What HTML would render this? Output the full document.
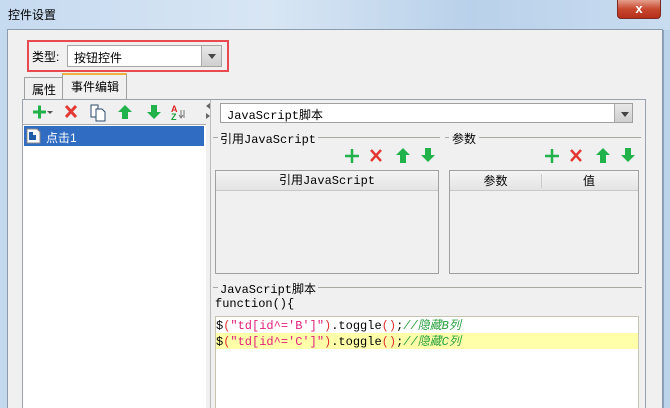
<!DOCTYPE html>
<html style="overflow:hidden;height:408px"><head><meta charset="utf-8"><style>
*{margin:0;padding:0;box-sizing:border-box}
body{width:670px;height:408px;overflow:hidden;position:relative;background:#f0f0f0;font-family:"Liberation Sans","Noto Sans CJK SC",sans-serif;font-size:12px;color:#000}
.a{position:absolute}
.m{font-family:"Liberation Mono","Noto Sans CJK SC",monospace;font-size:12px}
.cb{position:absolute;right:0;top:0;bottom:0;width:20px;background:linear-gradient(#e8e8e8,#cfcfcf);border-left:1px solid #aaa}
.cb:after{content:"";position:absolute;left:6px;top:8px;border-left:4px solid transparent;border-right:4px solid transparent;border-top:5px solid #444}
</style></head><body>
<div class="a" style="left:0;top:0;width:670px;height:30px;background:linear-gradient(90deg,#c6daf0,#d8e6f4 40%,#b9d1ea 70%,#c9dcf0)"></div>
<div class="a" style="left:8px;top:6px;font-size:12px">控件设置</div>
<div class="a" style="left:617px;top:0;width:44px;height:19px;background:linear-gradient(#e3a08e,#c8482f 50%,#b62e1a);border:1px solid #7a2a20;border-top:none;border-radius:0 0 4px 4px;color:#fff;font-weight:bold;text-align:center;line-height:18px;font-size:13px">x</div>
<div class="a" style="left:0;top:30px;width:7px;height:378px;background:#c4d8ee"></div>
<div class="a" style="left:663px;top:30px;width:7px;height:378px;background:#bcd3ec;border-left:1px solid #8aa2bd"></div>
<div class="a" style="left:7px;top:29px;width:656px;height:379px;background:#f0f0f0;border:1px solid #8c9cae;border-bottom:none"></div>
<div class="a" style="left:27px;top:40px;width:202px;height:32px;border:2px solid #e84a4f"></div>
<div class="a" style="left:32px;top:48px">类型:</div>
<div class="a" style="left:67px;top:45px;width:155px;height:22px;background:#fff;border:1px solid #a5a5a5"><span class="a" style="left:6px;top:3px">按钮控件</span><div class="cb"></div></div>
<div class="a" style="left:24px;top:77px;width:39px;height:22px;border:1px solid #a0a0a0;border-bottom:none;background:#f0f0f0;padding:3px 0 0 7px">属性</div>
<div class="a" style="left:62px;top:73px;width:65px;height:27px;border:1px solid #a0a0a0;border-top:2px solid #f0b040;border-bottom:none;background:#f0f0f0;padding:3px 0 0 8px">事件编辑</div>
<div class="a" style="left:22px;top:99px;width:624px;height:309px;border:1px solid #9aa3ad;border-bottom:none"></div>
<svg class="a" style="left:30px;top:102px" width="160" height="20">
<path d="M3 10h13M9.5 3.5v13" stroke="#22b24c" stroke-width="3"/>
<path d="M17 9l3 3 3-3z" fill="#555"/>
<path d="M36 4l10 11M46 4L36 15" stroke="#e53935" stroke-width="3"/>
<path d="M61 3h7v12h-7z" fill="#fff" stroke="#2a4a6a"/><path d="M66 7h6l3 3v9h-9z" fill="#fff" stroke="#2a4a6a"/>
<path d="M95 3l-7 7h4v7h6v-7h4z" fill="#22b24c"/>
<path d="M121 3v7h-4l7 7 7-7h-4V3z" fill="#22b24c"/>
<text x="141" y="10" font-size="9" fill="#d22" font-weight="bold" font-family="Liberation Sans">A</text>
<text x="141" y="18" font-size="9" fill="#1a9c3a" font-weight="bold" font-family="Liberation Sans">Z</text>
<path d="M151 8v8M149 13l2 3 2-3M154 8v8" stroke="#777" stroke-width="1" fill="none"/>
</svg>
<div class="a" style="left:23px;top:124px;width:183px;height:284px;background:#fff;border-top:1px solid #aaa"></div>
<div class="a" style="left:24px;top:126px;width:180px;height:20px;background:#2f6cc2"></div>
<svg class="a" style="left:26px;top:128px" width="16" height="16"><path d="M1 1h10l3 3v11H1z" fill="#fff" stroke="#888"/><path d="M3 4h4v3h3v5H3z" fill="#1e5ea8"/></svg>
<div class="a" style="left:46px;top:129px;color:#fff;font-size:12px">点击1</div>
<div class="a" style="left:205px;top:100px;width:6px;height:308px;border-right:1px solid #bbb"></div>
<svg class="a" style="left:205px;top:103px" width="6" height="20"><path d="M5 0v6L1 3zM1 10v6l4-3z" fill="#666"/></svg>
<div class="a" style="left:220px;top:103px;width:413px;height:20px;background:#fff;border:1px solid #a0a0a0"><span class="a m" style="left:6px;top:2px">JavaScript脚本</span><div class="cb" style="width:18px"></div></div>
<div class="a" style="left:213px;top:137px;width:227px;border-top:1px solid #a8a8a0"></div>
<div class="a m" style="left:218px;top:130px;background:#f0f0f0;padding:0 2px">引用JavaScript</div>
<div class="a" style="left:445px;top:137px;width:196px;border-top:1px solid #a8a8a0"></div>
<div class="a" style="left:449px;top:130px;background:#f0f0f0;padding:0 3px">参数</div>
<svg class="a" style="left:343px;top:146px" width="300" height="20">
<g id="ic"><path d="M2 10h14M9 3v14" stroke="#22b24c" stroke-width="2.5"/>
<path d="M28 4l10 11M38 4L28 15" stroke="#e53935" stroke-width="2.5"/>
<path d="M60 2l-7 7h4v8h6v-8h4z" fill="#22b24c"/>
<path d="M82 2v7h-4l7 7 7-7h-4V2z" fill="#22b24c"/></g>
<use href="#ic" x="200"/>
</svg>
<div class="a" style="left:215px;top:170px;width:224px;height:104px;border:1px solid #a0a0a0"></div>
<div class="a m" style="left:216px;top:171px;width:222px;height:20px;background:linear-gradient(#f4f4f4,#e4e4e4);border-bottom:1px solid #c8c8c8;text-align:center;line-height:20px">引用JavaScript</div>
<div class="a" style="left:449px;top:170px;width:190px;height:104px;border:1px solid #a0a0a0"></div>
<div class="a" style="left:450px;top:171px;width:188px;height:20px;background:linear-gradient(#f4f4f4,#e4e4e4);border-bottom:1px solid #c8c8c8"></div>
<div class="a" style="left:450px;top:174px;width:92px;text-align:center;border-right:1px solid #ccc;height:14px;line-height:14px">参数</div>
<div class="a" style="left:542px;top:174px;width:94px;text-align:center;height:14px;line-height:14px">值</div>
<div class="a" style="left:213px;top:287px;width:429px;border-top:1px solid #a8a8a0"></div>
<div class="a m" style="left:218px;top:280px;background:#f0f0f0;padding:0 2px">JavaScript脚本</div>
<div class="a m" style="left:215px;top:297px">function(){</div>
<div class="a" style="left:215px;top:316px;width:424px;height:92px;background:#fff;border:1px solid #c8c4b4;border-bottom:none"></div>
<div class="a" style="left:216px;top:333px;width:422px;height:16px;background:#ffffaa"></div>
<div class="a m" style="left:216px;top:318px;line-height:16px;white-space:pre">$<span style="color:#e03030">(</span><span style="color:#e0207a">"td[id^='B']"</span><span style="color:#e03030">)</span>.toggle<span style="color:#e03030">()</span>;<i style="color:#2aa040">//隐藏B列</i>
$<span style="color:#e03030">(</span><span style="color:#e0207a">"td[id^='C']"</span><span style="color:#e03030">)</span>.toggle<span style="color:#e03030">()</span>;<i style="color:#2aa040">//隐藏C列</i></div>
</body></html>
